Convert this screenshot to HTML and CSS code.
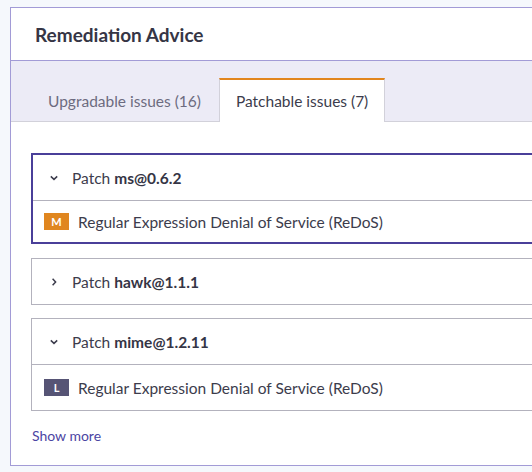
FILE: index.html
```html
<!DOCTYPE html>
<html lang="en">
<head>
<meta charset="utf-8">
<link rel="stylesheet" href="styles.css">
<title>Remediation Advice</title>
</head>
<body>
<section class="card">
  <header class="card-head"><h2 class="title">Remediation Advice</h2></header>
  <nav class="tabs">
    <div class="tab">Upgradable issues (16)</div>
    <div class="tab active">Patchable issues (7)</div>
  </nav>
  <div class="card-body">
    <div class="panel selected">
      <div class="panel-head">
        <svg class="chev" viewBox="0 0 10 10" width="10" height="10"><path d="M1.8 3.4 L5 6.4 L8.2 3.4" fill="none" stroke="#3c3c4c" stroke-width="1.5"/></svg>
        <span>Patch <b>ms@0.6.2</b></span>
      </div>
      <div class="panel-row"><span class="sev sev-m">M</span><span>Regular Expression Denial of Service (ReDoS)</span></div>
    </div>
    <div class="panel">
      <div class="panel-head">
        <svg class="chev" viewBox="0 0 10 10" width="10" height="10"><path d="M3.6 1.8 L6.6 5 L3.6 8.2" fill="none" stroke="#3c3c4c" stroke-width="1.5"/></svg>
        <span>Patch <b>hawk@1.1.1</b></span>
      </div>
    </div>
    <div class="panel">
      <div class="panel-head">
        <svg class="chev" viewBox="0 0 10 10" width="10" height="10"><path d="M1.8 3.4 L5 6.4 L8.2 3.4" fill="none" stroke="#3c3c4c" stroke-width="1.5"/></svg>
        <span>Patch <b>mime@1.2.11</b></span>
      </div>
      <div class="panel-row"><span class="sev sev-l">L</span><span>Regular Expression Denial of Service (ReDoS)</span></div>
    </div>
    <a class="more" href="#">Show more</a>
  </div>
</section>
</body>
</html>
```
FILE: styles.css
```css
html, body { margin: 0; padding: 0; }
body {
  background: #f5f8fc;
  font-family: Lato, "Open Sans", sans-serif;
  color: #3c3c4c;
  overflow: hidden;
  width: 532px;
  height: 472px;
}
.card {
  margin: 7px 0 0 10px;
  width: 580px;
  background: #fff;
  border: 1px solid #a29bd6;
  box-sizing: border-box;
}
.card-head {
  height: 52px;
  display: flex;
  align-items: center;
  padding-left: 24px;
  border-bottom: 1px solid #a29bd6;
}
.title {
  margin: 0;
  font-size: 19px;
  font-weight: 700;
  color: #353545;
}
.tabs {
  background: #ecebf6;
  display: flex;
  gap: 1px;
  padding: 17px 0 0 20px;
  border-bottom: 1px solid #d2d1da;
  height: 43px;
}
.tab {
  padding: 0 17px;
  font-size: 15.5px;
  color: #6c6b80;
  display: flex;
  align-items: center;
  box-sizing: border-box;
  height: 43px;
  border-top: 2px solid transparent;
}
.tab.active {
  background: #fff;
  color: #3c3c4c;
  border-top: 2px solid #e2861d;
  border-left: 1px solid #d2d1da;
  border-right: 1px solid #d2d1da;
  height: 44px;
  margin-bottom: -1px;
  padding: 0 16px;
}
.card-body {
  padding: 31px 0 0 20px;
  height: 312px;
}
.panel {
  border: 1px solid #b3b2bd;
  margin-bottom: 13px;
  font-size: 15.5px;
}
.panel.selected {
  border: 2px solid #4a3f99;
  margin-bottom: 14px;
}
.panel-head {
  height: 45px;
  display: flex;
  align-items: center;
  padding-left: 17px;
}
.panel.selected .panel-head { padding-left: 16px; }
.chev { margin-right: 13px; flex-shrink: 0; }
.panel-head b { font-weight: 700; color: #353545; }
.panel-row {
  border-top: 1px solid #b3b2bd;
  height: 45px;
  display: flex;
  align-items: center;
  padding-left: 12px;
}
.panel.selected .panel-row { height: 41px; padding-left: 11px; }
.sev {
  flex-shrink: 0;
  width: 25px;
  height: 17px;
  line-height: 17px;
  display: inline-block;
  text-align: center;
  color: #fff;
  font-size: 11px;
  font-weight: 700;
  margin-right: 9px;
}
.sev-m { background: #e0861f; }
.sev-l { background: #565475; }
.more {
  display: inline-block;
  margin-top: 3px;
  margin-left: 1px;
  font-size: 14px;
  color: #4b45a3;
  text-decoration: none;
}
```
